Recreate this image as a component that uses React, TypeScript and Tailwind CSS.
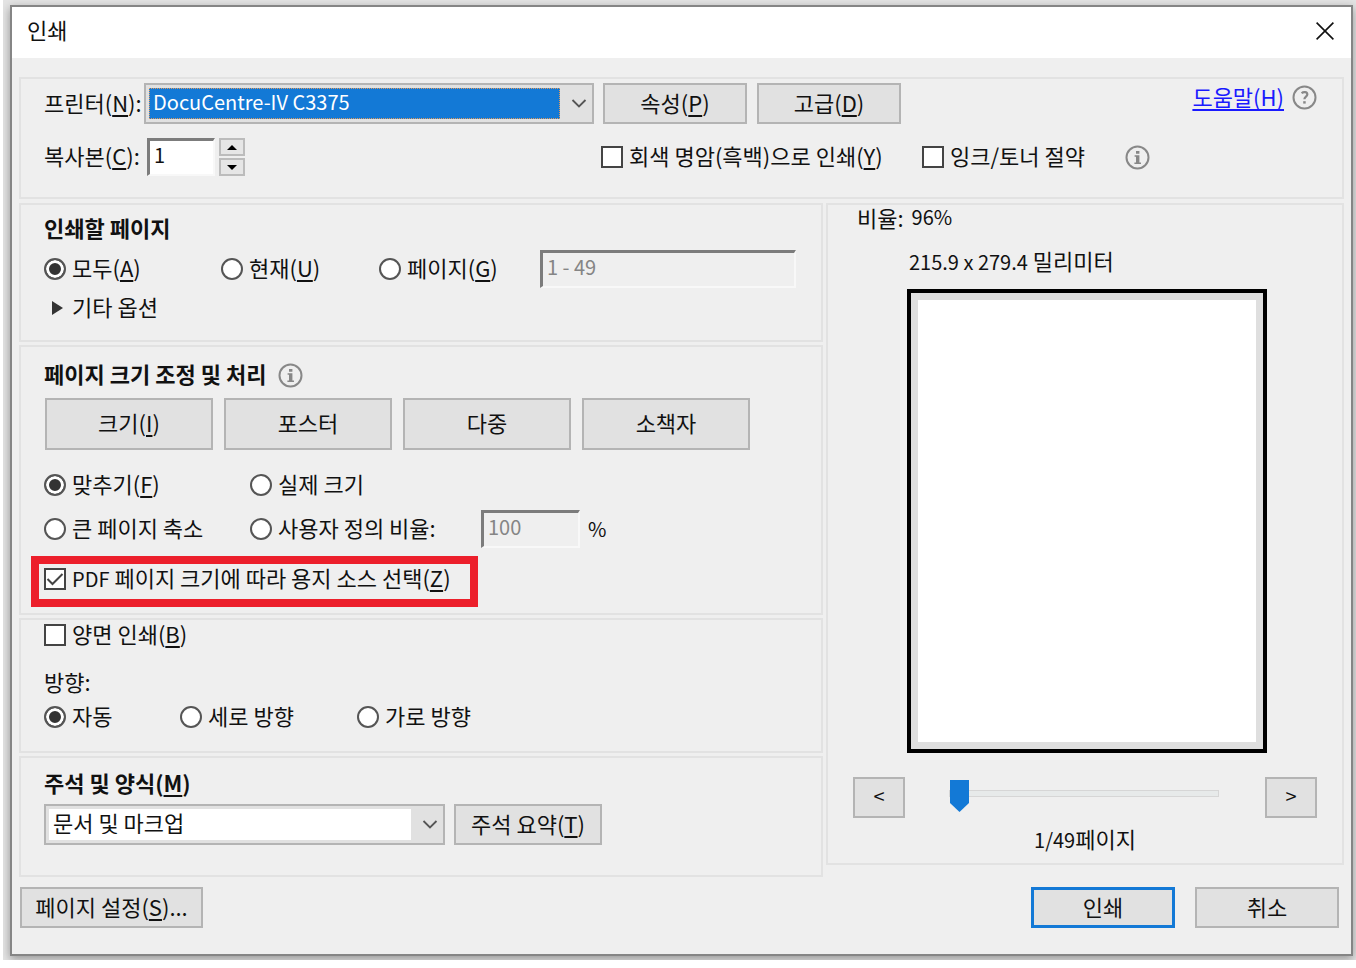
import { useState } from 'react'
import type { ReactNode } from 'react'
import clsx from 'clsx'

interface ChoiceProps {
  children: ReactNode
  name?: string
  defaultChecked?: boolean
  className?: string
}

interface ButtonProps {
  children: ReactNode
  className?: string
  onClick?: () => void
}

const SUNKEN = 'h-[38px] border-t-[3px] border-l-[3px] border-r-2 border-b-2 border-t-[#7c7c7c] border-l-[#7c7c7c] border-r-[#f8f8f8] border-b-[#f8f8f8] px-[4px] pb-[6px] text-[20px]'
const SPIN = 'grid h-[18px] w-[26px] place-items-center border-2 border-[#bcbcbc] bg-[#e6e6e6]'
const BORDER = 'border-2 border-[#b4b4b4]'

function Group({ children, className }: { children: ReactNode; className?: string }) {
  return <section className={clsx('border-2 border-[#e2e2e2] px-[23px]', className)}>{children}</section>
}

// Access key shown after a label, e.g. (N)
function Key({ k }: { k: string }) {
  return (
    <>
      (<u className="underline underline-offset-3 [text-decoration-skip-ink:none]">{k}</u>)
    </>
  )
}

// Latin text runs a size smaller than the Hangul around it
function Latin({ children }: { children: ReactNode }) {
  return <span className="text-[20px] leading-none">{children}</span>
}

function Button({ children, className, onClick }: ButtonProps) {
  return (
    <button
      type="button"
      onClick={onClick}
      className={clsx('shrink-0 bg-[#e1e1e1] pb-1 text-center', className ?? 'h-[41px] w-36 border-2 border-[#b4b4b4]')}
    >
      {children}
    </button>
  )
}

function Radio({ children, name, defaultChecked, className }: ChoiceProps) {
  return (
    <label className={clsx('flex shrink-0 items-center gap-[6px] whitespace-nowrap', className)}>
      <input
        type="radio"
        name={name}
        defaultChecked={defaultChecked}
        className="size-[22px] shrink-0 appearance-none rounded-full border-2 border-[#555] bg-white checked:bg-[#333] checked:shadow-[inset_0_0_0_3px_white]"
      />
      <span className="pb-1">{children}</span>
    </label>
  )
}

function Checkbox({ children, defaultChecked, className }: ChoiceProps) {
  return (
    <label className={clsx('flex shrink-0 items-center gap-[6px] whitespace-nowrap', className)}>
      <span className="relative size-[22px] shrink-0">
        <input type="checkbox" defaultChecked={defaultChecked} className="peer block size-[22px] appearance-none border-2 border-[#444] bg-white" />
        <svg className="pointer-events-none absolute inset-0 hidden size-[22px] peer-checked:block" viewBox="0 0 22 22" fill="none" stroke="#444" strokeWidth="2">
          <path d="M3.5 11l5 5L18.5 6" />
        </svg>
      </span>
      <span className="pb-1">{children}</span>
    </label>
  )
}

function Chevron() {
  return (
    <svg className="mr-[5px] ml-[11px] h-[9px] w-4 shrink-0 self-center" viewBox="0 0 16 9" fill="none" stroke="#555" strokeWidth="1.8">
      <path d="M1.5 1L8 7.5 14.5 1" />
    </svg>
  )
}

function InfoIcon() {
  return (
    <svg className="size-[25px] shrink-0" viewBox="0 0 25 25" fill="none">
      <circle cx="12.5" cy="12.5" r="11" stroke="#888" strokeWidth="2" />
      <path d="M11 6h3.4v2.8H11zM9.6 10.2h4.8v7.2H16V19H9.4v-1.6H11v-5.6H9.6z" fill="#888" />
    </svg>
  )
}

function HelpIcon() {
  return (
    <svg className="size-[25px] shrink-0" viewBox="0 0 25 25" fill="none">
      <circle cx="12.5" cy="12.5" r="11" stroke="#888" strokeWidth="2" />
      <path d="M9.6 8.2c1.8-1.6 5.7-1.5 5.7 1.2 0 2.2-2.9 2.2-2.9 4.8" stroke="#888" strokeWidth="2.2" />
      <path d="M11.2 16.2h2.5v2.4h-2.5z" fill="#888" />
    </svg>
  )
}

export default function App() {
  const [copies, setCopies] = useState(1)
  const [page, setPage] = useState(1)

  return (
    <div className="min-h-screen bg-white pl-[3px] font-['Noto_Sans_CJK_KR','Noto_Sans',sans-serif] text-[22px] leading-6 text-[#111]">
      <div className="overflow-hidden bg-[#e4e4e4] pt-[5px] pr-[3px] pb-1 pl-[7px]">
        <main className="border-2 border-[#858585] bg-[#efefef] shadow-[0_3px_9px_rgba(0,0,0,0.35)]">
          <header className="flex h-[51px] items-center justify-between bg-white pr-[17px] pb-1 pl-[15px]">
            <h1 className="pb-1">인쇄</h1>
            <button type="button" aria-label="닫기">
              <svg className="size-[18px]" viewBox="0 0 18 18" stroke="#111" strokeWidth="1.6">
                <path d="M.6.6l16.8 16.8M17.4.6L.6 17.4" />
              </svg>
            </button>
          </header>

          <div className="px-[7px] pt-[19px] pb-[26px]">
            {/* Printer */}
            <Group className="mb-1 pt-1 pb-[21px]">
              <div className="flex items-center">
                <label htmlFor="printer" className="w-[100px] shrink-0 pb-1 whitespace-nowrap">
                  프린터
                  <Key k="N" />:
                </label>
                <div className={clsx(BORDER, 'flex h-[41px] w-[450px] bg-[#e1e1e1] py-[3px] pl-[3px]')}>
                  <select
                    id="printer"
                    className="min-w-0 flex-1 appearance-none bg-[#1379d6] pb-1 pl-1 text-[20px] text-white outline-1 -outline-offset-1 outline-[#e09a5c] outline-dotted"
                  >
                    <option>DocuCentre-IV C3375</option>
                  </select>
                  <Chevron />
                </div>
                <div className="ml-[9px] flex gap-[10px]">
                  <Button>
                    속성
                    <Key k="P" />
                  </Button>
                  <Button>
                    고급
                    <Key k="D" />
                  </Button>
                </div>
                <div className="mr-[2px] mb-3 ml-auto flex items-center gap-2">
                  <a href="#help" className="pb-1 text-[#1a1aff] underline underline-offset-3 [text-decoration-skip-ink:none]">
                    도움말(H)
                  </a>
                  <HelpIcon />
                </div>
              </div>
              <div className="mt-[14px] flex items-center">
                <label htmlFor="copies" className="w-[103px] shrink-0 pb-1 whitespace-nowrap">
                  복사본
                  <Key k="C" />:
                </label>
                <input
                  id="copies"
                  value={copies}
                  onChange={(e) => setCopies(Number(e.target.value) || 1)}
                  className={clsx(SUNKEN, 'w-[68px] bg-white')}
                />
                <div className="ml-1 flex w-[26px] flex-col gap-[2px]">
                  <button type="button" aria-label="늘리기" className={SPIN} onClick={() => setCopies(copies + 1)}>
                    <svg className="h-[5px] w-[10px]" viewBox="0 0 10 5">
                      <path d="M0 5l5-5 5 5z" />
                    </svg>
                  </button>
                  <button type="button" aria-label="줄이기" className={SPIN} onClick={() => setCopies(Math.max(1, copies - 1))}>
                    <svg className="h-[5px] w-[10px]" viewBox="0 0 10 5">
                      <path d="M0 0l5 5 5-5z" />
                    </svg>
                  </button>
                </div>
                <Checkbox className="ml-[356px] w-[321px]">
                  회색 명암(흑백)으로 인쇄
                  <Key k="Y" />
                </Checkbox>
                <Checkbox className="w-[203px]">잉크/토너 절약</Checkbox>
                <InfoIcon />
              </div>
            </Group>

            <div className="flex items-start gap-[3px]">
              <div className="flex w-[804px] shrink-0 flex-col gap-[3px]">
                {/* Page range */}
                <Group className="pt-[10px] pb-[18px]">
                  <h2 className="pb-1 font-bold">인쇄할 페이지</h2>
                  <div className="mt-[7px] flex items-center">
                    <Radio name="range" defaultChecked className="w-[177px]">
                      모두
                      <Key k="A" />
                    </Radio>
                    <Radio name="range" className="w-[158px]">
                      현재
                      <Key k="U" />
                    </Radio>
                    <Radio name="range" className="w-[161px]">
                      페이지
                      <Key k="G" />
                    </Radio>
                    <input aria-label="페이지 범위" disabled defaultValue="1 - 49" className={clsx(SUNKEN, 'w-64 text-[#858585]')} />
                  </div>
                  <button type="button" className="mt-[6px] flex items-center gap-[9px] pl-2">
                    <svg className="h-[14px] w-[11px]" viewBox="0 0 11 14" fill="#333">
                      <path d="M0 0l11 7-11 7z" />
                    </svg>
                    <span className="pb-1">기타 옵션</span>
                  </button>
                </Group>

                {/* Sizing */}
                <Group className="pt-[14px] pb-[6px]">
                  <div className="flex items-center gap-3">
                    <h2 className="pb-1 font-bold">페이지 크기 조정 및 처리</h2>
                    <InfoIcon />
                  </div>
                  <div className="mt-[9px] flex gap-[11px] pl-[1px]">
                    <Button className={clsx(BORDER, 'h-[52px] w-42')}>
                      크기
                      <Key k="I" />
                    </Button>
                    <Button className={clsx(BORDER, 'h-[52px] w-42')}>포스터</Button>
                    <Button className={clsx(BORDER, 'h-[52px] w-42')}>다중</Button>
                    <Button className={clsx(BORDER, 'h-[52px] w-42')}>소책자</Button>
                  </div>
                  <div className="mt-[21px] flex items-center">
                    <Radio name="scale" defaultChecked className="w-[206px]">
                      맞추기
                      <Key k="F" />
                    </Radio>
                    <Radio name="scale">실제 크기</Radio>
                  </div>
                  <div className="mt-[11px] flex items-center">
                    <Radio name="scale" className="w-[206px]">
                      큰 페이지 축소
                    </Radio>
                    <Radio name="scale" className="w-[231px]">
                      사용자 정의 비율:
                    </Radio>
                    <input id="custom" aria-label="사용자 정의 비율" disabled defaultValue="100" className={clsx(SUNKEN, 'w-[99px] text-[#858585]')} />
                    <label htmlFor="custom" className="ml-2 text-[20px]">
                      %
                    </label>
                  </div>
                  <div className="mt-2 -ml-[13px] w-[447px] border-8 border-[#ec1f2b] pt-[1px] pb-[6px] pl-[5px]">
                    <Checkbox defaultChecked>
                      <Latin>PDF</Latin> 페이지 크기에 따라 용지 소스 선택
                      <Key k="Z" />
                    </Checkbox>
                  </div>
                </Group>

                {/* Duplex and orientation */}
                <Group className="pt-[1px] pb-5">
                  <Checkbox>
                    양면 인쇄
                    <Key k="B" />
                  </Checkbox>
                  <p className="mt-5 pb-1">방향:</p>
                  <div className="mt-[6px] flex items-center">
                    <Radio name="orientation" defaultChecked className="w-34">
                      자동
                    </Radio>
                    <Radio name="orientation" className="w-[177px]">
                      세로 방향
                    </Radio>
                    <Radio name="orientation">가로 방향</Radio>
                  </div>
                </Group>

                {/* Comments and forms */}
                <Group className="pt-3 pb-[30px]">
                  <label htmlFor="comments" className="block pb-1 font-bold">
                    주석 및 양식
                    <Key k="M" />
                  </label>
                  <div className="mt-[6px] flex items-center gap-[9px]">
                    <div className={clsx(BORDER, 'flex h-[41px] w-[401px] bg-[#e1e1e1] py-[3px] pl-[3px]')}>
                      <select id="comments" className="min-w-0 flex-1 appearance-none bg-white pb-[6px] pl-1">
                        <option>문서 및 마크업</option>
                      </select>
                      <Chevron />
                    </div>
                    <Button className={clsx(BORDER, 'h-[41px] w-37')}>
                      주석 요약
                      <Key k="T" />
                    </Button>
                  </div>
                </Group>
              </div>

              {/* Preview */}
              <section className="min-w-0 flex-1 border-2 border-[#e2e2e2] px-[25px] pb-[9px]">
                <p className="flex items-center gap-2 pb-1 pl-1">
                  <span>비율:</span>
                  <Latin>96%</Latin>
                </p>
                <p className="mt-[15px] pb-1 pl-14">
                  <Latin>215.9 x 279.4</Latin> 밀리미터
                </p>
                <div className="mt-[13px] flex justify-center pl-1">
                  <div className="h-[464px] w-[360px] border-4 border-black bg-[#dfdfdf] p-[7px]">
                    <div className="h-full bg-white" />
                  </div>
                </div>
                <div className="mt-6 flex items-center">
                  <Button className={clsx(BORDER, 'h-[41px] w-13 text-[20px]')} onClick={() => setPage(Math.max(1, page - 1))}>
                    &lt;
                  </Button>
                  <input
                    type="range"
                    aria-label="페이지"
                    min={1}
                    max={49}
                    value={page}
                    onChange={(e) => setPage(Number(e.target.value))}
                    className="mr-[46px] mb-2 ml-11 h-8 min-w-0 flex-1 appearance-none bg-transparent [&::-webkit-slider-runnable-track]:h-[7px] [&::-webkit-slider-runnable-track]:border [&::-webkit-slider-runnable-track]:border-[#d6d6d6] [&::-webkit-slider-runnable-track]:bg-[#e7eaea] [&::-webkit-slider-thumb]:-mt-[11px] [&::-webkit-slider-thumb]:h-8 [&::-webkit-slider-thumb]:w-[19px] [&::-webkit-slider-thumb]:appearance-none [&::-webkit-slider-thumb]:bg-[#1379d6] [&::-webkit-slider-thumb]:[clip-path:polygon(0_0,100%_0,100%_72%,50%_100%,0_72%)]"
                  />
                  <Button className={clsx(BORDER, 'h-[41px] w-13 text-[20px]')} onClick={() => setPage(Math.min(49, page + 1))}>
                    &gt;
                  </Button>
                </div>
                <p className="mt-2 pb-1 text-center">
                  <Latin>{page}/49</Latin>페이지
                </p>
              </section>
            </div>

            <footer className="mt-[10px] flex gap-5 pr-[5px] pl-[1px]">
              <Button className={clsx(BORDER, 'mr-auto h-[41px] w-[183px]')}>
                페이지 설정
                <Key k="S" />
                ...
              </Button>
              <Button className="h-[41px] w-36 border-[3px] border-[#1379d6]">인쇄</Button>
              <Button>취소</Button>
            </footer>
          </div>
        </main>
      </div>
    </div>
  )
}
